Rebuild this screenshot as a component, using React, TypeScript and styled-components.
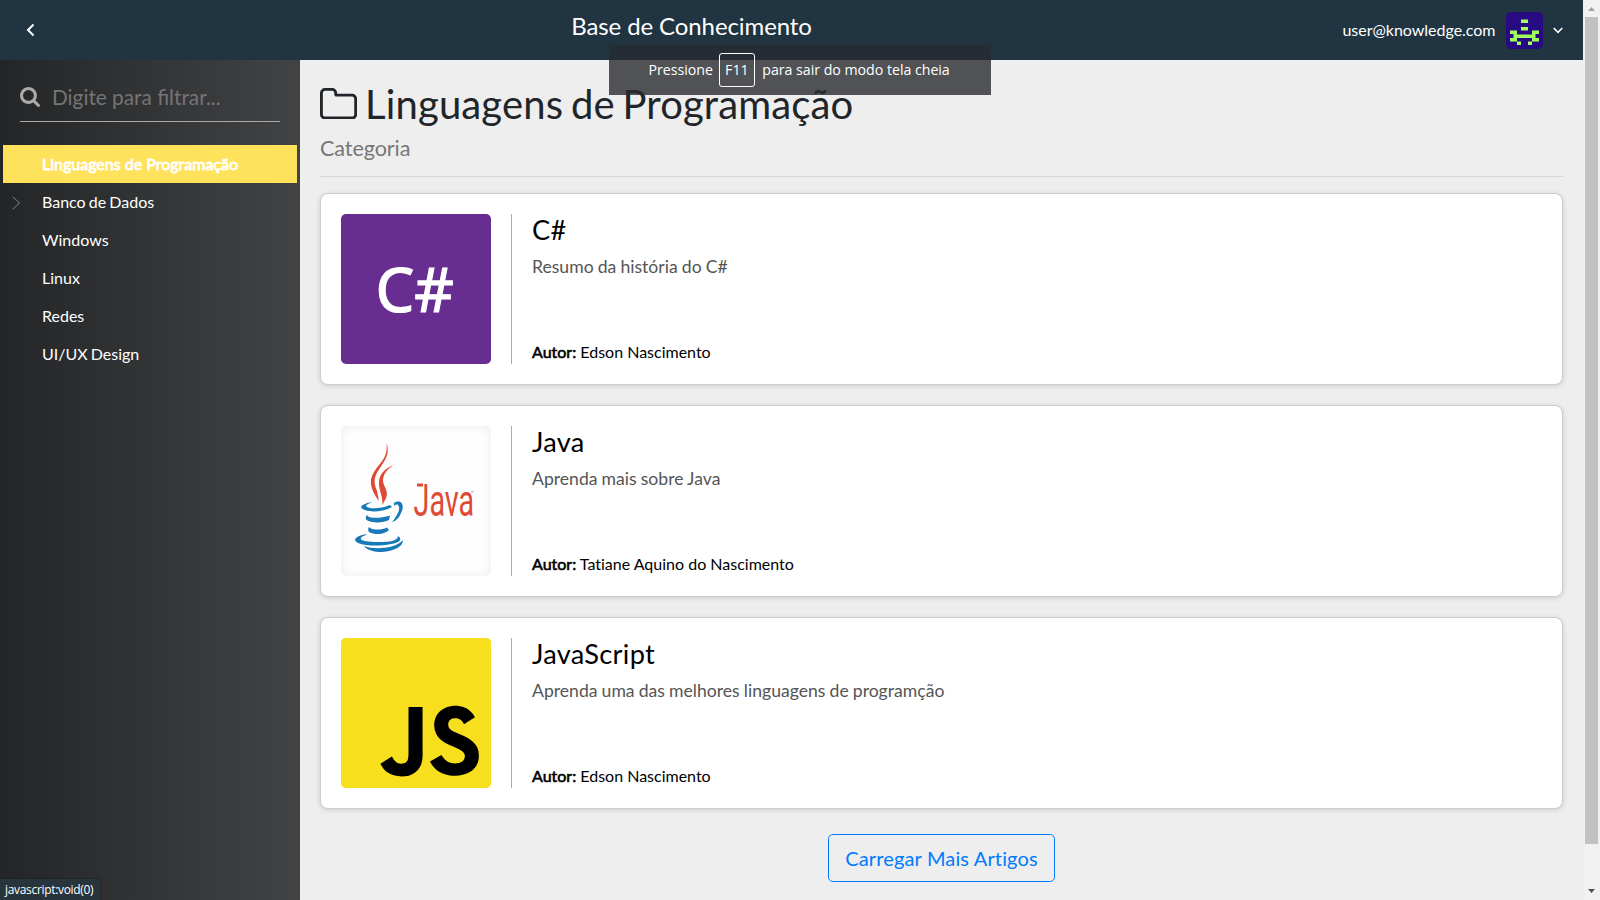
import React from "react";
import styled, { createGlobalStyle } from "styled-components";
import { SiJavascript } from "react-icons/si";

const GlobalStyle = createGlobalStyle`
  * { box-sizing: border-box; }
  body { margin: 0; overflow: hidden; font-family: Lato, "Open Sans", sans-serif; font-size: 16px; line-height: 1.5; color: #212529; font-variant-ligatures: none; }
`;

const Screen = styled.div`
  position: relative;
  display: flex;
  width: 1600px;
  height: 900px;
  background: #eee;
  overflow: hidden;
`;

const Page = styled.div`
  display: grid;
  grid-template-rows: 60px 1fr;
  grid-template-columns: 300px 1fr;
  width: 1583px;
  height: 900px;
`;

const Header = styled.header`
  grid-column: 1 / 3;
  display: flex;
  align-items: center;
  background: #203441;
  color: #fff;
`;

const Toggle = styled.a`
  display: flex;
  width: 60px;
  justify-content: center;
`;

const HeaderTitle = styled.h1`
  flex: 1;
  margin: 0 0 8px;
  text-align: center;
  font-size: 24px;
  font-weight: 400;
  line-height: 28px;
  letter-spacing: -0.1px;
`;

const UserMenu = styled.div`
  display: flex;
  align-items: center;
  width: 260px;
  justify-content: flex-end;
  padding-right: 20px;
  white-space: nowrap;
  letter-spacing: -0.02px;
`;

const Avatar = styled.svg`
  width: 37px;
  height: 37px;
  margin: 0 10px 0 10.500px;
  border-radius: 5px;
  background: #280a82;
`;

const Sidebar = styled.aside`
  background: linear-gradient(to right, #232526, #414345);
  overflow: hidden;
`;

const Filter = styled.div`
  display: flex;
  align-items: center;
  height: 42px;
  margin: 20px 20px 23px;
  border-bottom: 1px solid #aaa;
  color: #757575;
  font-size: 20.8px;
  font-variant-ligatures: normal;
  line-height: 30px;
  padding-bottom: 7px;
`;

const SearchIcon = styled.svg`
  width: 20px;
  height: 20px;
  margin-right: 12px;
  fill: #aaa;
`;

const Tree = styled.ul`
  list-style: none;
  margin: 0;
  padding: 0 3px;
`;

const TreeItem = styled.li<{ $selected?: boolean }>`
  display: flex;
  align-items: center;
  height: 38px;
  color: #fff;
  background: ${(p) => (p.$selected ? "#ffe25b" : "transparent")};
  -webkit-text-stroke: ${(p) => (p.$selected ? "0.8px #fff" : "0")};
  word-spacing: ${(p) => (p.$selected ? "0" : "-1px")};
`;

const Arrow = styled.span`
  display: flex;
  width: 39px;
  padding: 1px 0 0 9px;
`;

const Content = styled.main`
  padding: 20px;
  overflow: hidden;
`;

const PageTitle = styled.h1`
  display: flex;
  align-items: center;
  gap: 8px;
  margin: 0;
  font-size: 40px;
  font-weight: 400;
  line-height: 48px;
  letter-spacing: 0.14px;
  word-spacing: -2.6px;
`;

const FolderIcon = styled.svg`
  width: 37.1px;
  height: 31.4px;
  margin-top: -1px;
  fill: #212529;
`;

const Subtitle = styled.h2`
  margin: 4px 0 0;
  font-size: 21.6px;
  font-weight: 400;
  line-height: 33px;
  letter-spacing: -0.1px;
  color: #777;
`;

const Rule = styled.hr`
  margin: 11px 0 16px;
  border: 0;
  border-top: 1px solid #d7d7d7;
`;

const Card = styled.article`
  display: flex;
  height: 192px;
  margin-bottom: 20px;
  padding: 20px;
  background: #fff;
  border: 1px solid #ccc;
  border-radius: 8px;
  box-shadow: 0 1px 5px rgba(0, 0, 0, 0.15);
`;

const Thumb = styled.div<{ $bg: string; $shaded?: boolean }>`
  width: 150px;
  height: 150px;
  margin-right: 20px;
  border-radius: 5px;
  overflow: hidden;
  background: ${(p) => p.$bg};
  box-shadow: ${(p) => (p.$shaded ? "inset 0 0 12px #ededed" : "none")};
  svg { display: block; }
`;

const CardInfo = styled.div`
  display: flex;
  flex-direction: column;
  flex: 1;
  padding-left: 20px;
  border-left: 1px solid #aaa;
  color: #000;
`;

const CardTitle = styled.h2`
  margin: -1px 0 9px;
  font-size: 27.2px;
  font-weight: 400;
  line-height: 33px;
  letter-spacing: 0.3px;
`;

const CardText = styled.p`
  margin: 0;
  font-size: 17.6px;
  line-height: 24px;
  word-spacing: -0.4px;
  color: #555;
`;

const Author = styled.span`
  margin-top: auto;
  line-height: 24px;
  strong { font-weight: 400; -webkit-text-stroke: 0.6px #000; }
`;

const LoadMore = styled.button`
  display: block;
  margin: 25px auto 0;
  width: 227px;
  height: 48px;
  padding: 0;
  font: 20px/30px Lato, sans-serif;
  letter-spacing: 0.15px;
  font-variant-ligatures: none;
  color: #007bff;
  background: transparent;
  border: 1px solid #007bff;
  border-radius: 4.8px;
`;

const Scrollbar = styled.div`
  display: flex;
  flex-direction: column;
  align-items: center;
  width: 17px;
  height: 900px;
  background: #f1f1f1;
`;

const ScrollArrow = styled.svg`
  width: 17px;
  height: 17px;
`;

const ScrollThumb = styled.div`
  width: 13px;
  height: 827px;
  margin-bottom: 39px;
  background: #c1c1c1;
`;

const Toast = styled.div`
  position: absolute;
  top: 45px;
  left: 609px;
  display: flex;
  align-items: center;
  width: 382px;
  height: 50px;
  padding-left: 39.500px;
  background: rgba(40, 42, 47, 0.8);
  color: #fff;
  font: 14.2px/20px "Open Sans", sans-serif;
  white-space: nowrap;
  letter-spacing: -0.03px;
`;

const Key = styled.span`
  display: flex;
  align-items: center;
  justify-content: center;
  width: 36px;
  height: 34px;
  margin: 0 7.500px 0 6px;
  border: 1px solid #fff;
  border-radius: 3px;
`;

const StatusBar = styled.div`
  position: absolute;
  left: 0;
  bottom: 0;
  width: 100px;
  height: 21px;
  padding-left: 5px;
  border-top-right-radius: 4px;
  background: #29353c;
  box-shadow: 0 0 2px rgba(0, 0, 0, 0.5);
  color: #fff;
  font: 12px/21px "Open Sans", sans-serif;
  letter-spacing: -0.32px;
`;

const CSharpLogo = () => (
  <svg width="150" height="150" viewBox="0 0 150 150">
    <text x="34.500" y="97.500" fontFamily="Noto Sans" fontSize="62" fill="#fff" stroke="#fff" strokeWidth="1.200" textLength="78.500" lengthAdjust="spacingAndGlyphs">C#</text>
  </svg>
);

const JavaLogo = () => (
  <svg width="150" height="150" viewBox="0 0 150 150">
    <g fill="#dd4b36">
      <path d="M45.500 17 C49 27 45 33 39 42 C33 50 32 56 36 65 L38 75 C31 66 28 57 31 50 C34 42 41 37 44 30 C46 25 46 21 45.500 17Z" />
      <path d="M52.500 39 C45 44 42 49 42 55 C43 62 48 65 45 72 L41.500 79 C42 70 37 62 38 55 C39 47 45 42 52.500 39Z" />
      <text transform="translate(72.500 89.500) scale(0.64 1)" fontFamily="Roboto" fontSize="45">Java</text>
      <rect x="76" y="57.500" width="6" height="3" />
      <text x="130" y="68" fontFamily="Open Sans" fontSize="4">™</text>
    </g>
    <g fill="#1679b8">
      <path d="M31 76 C20 78 17 82 24 84 C32 87 44 85 51 81 L49 79 C40 83 30 83 26 81 C23 79 28 78 31 76Z" />
      <path d="M53 77 C61 72 64 80 60 87 C58 92 55 95 51 96 C57 89 60 82 57 79 C56 78 54 79 53 80Z" />
      <path d="M26 89 C23 93 26 95 31 96 C38 97 44 96 48 94 L49 89.500 C42 92 34 92 30 91.500 C27 91 27 90 26 89Z" />
      <path d="M28 101 C25 106 30 108 37 108 C42 108 46 106 48 104 L46 101.500 C41 104 34 104 30 102.500Z" />
      <path d="M26 108 C14 110 11 114 17 117 C27 121 49 120 57 116 C60 114 60 112 57 110 C57 115 48 116 38 116 C29 116 18 115 20 112 C21 110 24 110 26 108Z" />
      <path d="M23 120 C33 124 54 123 62 114 C62 121 53 125 41 126 C33 126 26 124 23 120Z" />
    </g>
  </svg>
);

const articles = [
  { title: "C#", text: "Resumo da história do C#", author: "Edson Nascimento", bg: "#672d91", logo: <CSharpLogo /> },
  { title: "Java", text: "Aprenda mais sobre Java", author: "Tatiane Aquino do Nascimento", bg: "#fefefe", shaded: true, logo: <JavaLogo /> },
  {
    title: "JavaScript",
    text: "Aprenda uma das melhores linguagens de programção",
    author: "Edson Nascimento",
    bg: "linear-gradient(#000, #000) 35px 62px / 108px 82px no-repeat #f7df1e",
    logo: <SiJavascript size={150} color="#f7df1e" />,
  },
];

const categories = ["Linguagens de Programação", "Banco de Dados", "Windows", "Linux", "Redes", "UI/UX Design"];

export default function App() {
  return (
    <Screen>
      <GlobalStyle />
      <Page>
        <Header>
          <Toggle>
            <svg width="10" height="14" viewBox="0 0 10 14" fill="none" stroke="#fff" strokeWidth="2">
              <path d="M8.500 1.500 L3 7 L8.500 12.500" />
            </svg>
          </Toggle>
          <HeaderTitle>Base de Conhecimento</HeaderTitle>
          <UserMenu>
            user@knowledge.com
            <Avatar viewBox="0 0 37 37">
              <path fill="#a0ff5f" d="M15 7.500h7v3.500h-7z M15 15h7v3.500h-7z M4 18.500h7v4h15v-4h7v3.500h-3.500v4h3.500v3.500h-7v-3.500h-15v3.500h-7v-3.500h3.500v-4h-3.500z M11 29.500h4v3.500h-4z M22 29.500h4v3.500h-4z" />
            </Avatar>
            <svg width="10" height="8" viewBox="0 0 10 8" fill="none" stroke="#fff" strokeWidth="1.600">
              <path d="M0.700 2 L5 6.300 L9.300 2" />
            </svg>
          </UserMenu>
        </Header>
        <Sidebar>
          <Filter>
            <SearchIcon viewBox="0 128 1664 1664">
              <path d="M1152 832q0-185-131.500-316.500t-316.500-131.500-316.500 131.500-131.500 316.500 131.500 316.500 316.500 131.500 316.500-131.500 131.500-316.500zm512 832q0 52-38 90t-90 38q-54 0-90-38l-343-342q-179 124-399 124-143 0-273.500-55.500t-225-150-150-225-55.500-273.500 55.500-273.500 150-225 225-150 273.500-55.500 273.500 55.500 225 150 150 225 55.500 273.500q0 220-124 399l343 343q37 37 37 90z" />
            </SearchIcon>
            Digite para filtrar...
          </Filter>
          <Tree>
            {categories.map((name, i) => (
              <TreeItem key={name} $selected={i === 0}>
                <Arrow>
                  {i === 1 && (
                    <svg width="9" height="14" viewBox="0 0 9 14" fill="none" stroke="#858585" strokeWidth="1">
                      <path d="M0.700 0.700 L7.500 7 L0.700 13.300" />
                    </svg>
                  )}
                </Arrow>
                {name}
              </TreeItem>
            ))}
          </Tree>
        </Sidebar>
        <Content>
          <PageTitle>
            <FolderIcon viewBox="0 128 1664 1408">
              <path d="M1536 1312v-704q0-40-28-68t-68-28h-704q-40 0-68-28t-28-68v-64q0-40-28-68t-68-28h-320q-40 0-68 28t-28 68v960q0 40 28 68t68 28h1216q40 0 68-28t28-68zm128-704v704q0 92-66 158t-158 66h-1216q-92 0-158-66t-66-158v-960q0-92 66-158t158-66h320q92 0 158 66t66 158v32h672q92 0 158 66t66 158z" />
            </FolderIcon>
            Linguagens de Programação
          </PageTitle>
          <Subtitle>Categoria</Subtitle>
          <Rule />
          {articles.map((a) => (
            <Card key={a.title}>
              <Thumb $bg={a.bg} $shaded={a.shaded}>{a.logo}</Thumb>
              <CardInfo>
                <CardTitle>{a.title}</CardTitle>
                <CardText>{a.text}</CardText>
                <Author><strong>Autor:</strong> {a.author}</Author>
              </CardInfo>
            </Card>
          ))}
          <LoadMore>Carregar Mais Artigos</LoadMore>
        </Content>
      </Page>
      <Scrollbar>
        <ScrollArrow viewBox="0 0 17 17"><path d="M5 11h7l-3.500-4z" fill="#a3a3a3" /></ScrollArrow>
        <ScrollThumb />
        <ScrollArrow viewBox="0 0 17 17"><path d="M5 6h7l-3.500 4z" fill="#505050" /></ScrollArrow>
      </Scrollbar>
      <Toast>Pressione<Key>F11</Key>para sair do modo tela cheia</Toast>
      <StatusBar>javascript:void(0)</StatusBar>
    </Screen>
  );
}
